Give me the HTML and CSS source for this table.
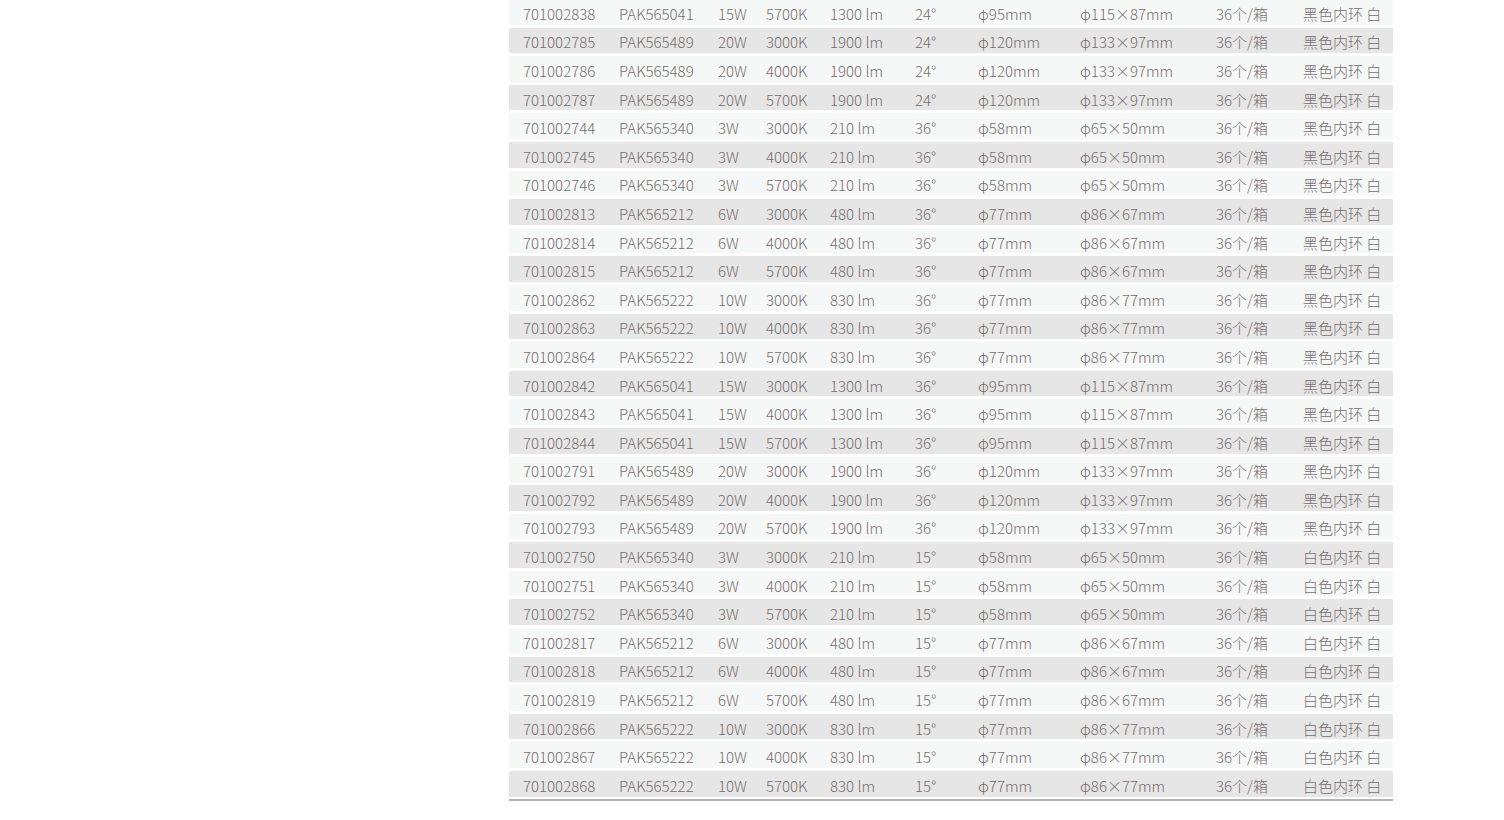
FILE: index.html
```html
<!DOCTYPE html>
<html lang="zh-CN">
<head>
    <meta charset="UTF-8">
    <meta name="viewport" content="width=device-width, initial-scale=1.0">
    <title>产品参数</title>
    <link rel="stylesheet" href="styles.css">
</head>
<body>

    <div class="page">
        <table class="spec-table">
            <colgroup>
                <col class="c-code">
                <col class="c-model">
                <col class="c-power">
                <col class="c-cct">
                <col class="c-lm">
                <col class="c-angle">
                <col class="c-cut">
                <col class="c-size">
                <col class="c-pack">
                <col class="c-color">
            </colgroup>
            <tbody id="rows"></tbody>
        </table>
    </div>

    <script>
        // code, model, power, cct, lumen, angle, cutout, size, ring
        const rows = [
            ['701002838', 'PAK565041', '15W', '5700K', '1300 lm', '24°', 'φ95mm', 'φ115×87mm', '黑色内环 白'],
            ['701002785', 'PAK565489', '20W', '3000K', '1900 lm', '24°', 'φ120mm', 'φ133×97mm', '黑色内环 白'],
            ['701002786', 'PAK565489', '20W', '4000K', '1900 lm', '24°', 'φ120mm', 'φ133×97mm', '黑色内环 白'],
            ['701002787', 'PAK565489', '20W', '5700K', '1900 lm', '24°', 'φ120mm', 'φ133×97mm', '黑色内环 白'],
            ['701002744', 'PAK565340', '3W', '3000K', '210 lm', '36°', 'φ58mm', 'φ65×50mm', '黑色内环 白'],
            ['701002745', 'PAK565340', '3W', '4000K', '210 lm', '36°', 'φ58mm', 'φ65×50mm', '黑色内环 白'],
            ['701002746', 'PAK565340', '3W', '5700K', '210 lm', '36°', 'φ58mm', 'φ65×50mm', '黑色内环 白'],
            ['701002813', 'PAK565212', '6W', '3000K', '480 lm', '36°', 'φ77mm', 'φ86×67mm', '黑色内环 白'],
            ['701002814', 'PAK565212', '6W', '4000K', '480 lm', '36°', 'φ77mm', 'φ86×67mm', '黑色内环 白'],
            ['701002815', 'PAK565212', '6W', '5700K', '480 lm', '36°', 'φ77mm', 'φ86×67mm', '黑色内环 白'],
            ['701002862', 'PAK565222', '10W', '3000K', '830 lm', '36°', 'φ77mm', 'φ86×77mm', '黑色内环 白'],
            ['701002863', 'PAK565222', '10W', '4000K', '830 lm', '36°', 'φ77mm', 'φ86×77mm', '黑色内环 白'],
            ['701002864', 'PAK565222', '10W', '5700K', '830 lm', '36°', 'φ77mm', 'φ86×77mm', '黑色内环 白'],
            ['701002842', 'PAK565041', '15W', '3000K', '1300 lm', '36°', 'φ95mm', 'φ115×87mm', '黑色内环 白'],
            ['701002843', 'PAK565041', '15W', '4000K', '1300 lm', '36°', 'φ95mm', 'φ115×87mm', '黑色内环 白'],
            ['701002844', 'PAK565041', '15W', '5700K', '1300 lm', '36°', 'φ95mm', 'φ115×87mm', '黑色内环 白'],
            ['701002791', 'PAK565489', '20W', '3000K', '1900 lm', '36°', 'φ120mm', 'φ133×97mm', '黑色内环 白'],
            ['701002792', 'PAK565489', '20W', '4000K', '1900 lm', '36°', 'φ120mm', 'φ133×97mm', '黑色内环 白'],
            ['701002793', 'PAK565489', '20W', '5700K', '1900 lm', '36°', 'φ120mm', 'φ133×97mm', '黑色内环 白'],
            ['701002750', 'PAK565340', '3W', '3000K', '210 lm', '15°', 'φ58mm', 'φ65×50mm', '白色内环 白'],
            ['701002751', 'PAK565340', '3W', '4000K', '210 lm', '15°', 'φ58mm', 'φ65×50mm', '白色内环 白'],
            ['701002752', 'PAK565340', '3W', '5700K', '210 lm', '15°', 'φ58mm', 'φ65×50mm', '白色内环 白'],
            ['701002817', 'PAK565212', '6W', '3000K', '480 lm', '15°', 'φ77mm', 'φ86×67mm', '白色内环 白'],
            ['701002818', 'PAK565212', '6W', '4000K', '480 lm', '15°', 'φ77mm', 'φ86×67mm', '白色内环 白'],
            ['701002819', 'PAK565212', '6W', '5700K', '480 lm', '15°', 'φ77mm', 'φ86×67mm', '白色内环 白'],
            ['701002866', 'PAK565222', '10W', '3000K', '830 lm', '15°', 'φ77mm', 'φ86×77mm', '白色内环 白'],
            ['701002867', 'PAK565222', '10W', '4000K', '830 lm', '15°', 'φ77mm', 'φ86×77mm', '白色内环 白'],
            ['701002868', 'PAK565222', '10W', '5700K', '830 lm', '15°', 'φ77mm', 'φ86×77mm', '白色内环 白']
        ];

        const tbody = document.getElementById('rows');
        rows.forEach(function(r) {
            const tr = document.createElement('tr');
            const cells = r.slice(0, 8).concat(['36个/箱', r[8]]);
            cells.forEach(function(text) {
                const td = document.createElement('td');
                td.textContent = text;
                tr.appendChild(td);
            });
            tbody.appendChild(tr);
        });
    </script>

</body>
</html>
```

FILE: styles.css
```css
body {
    margin: 0;
    background-color: #ffffff;
    font-family: 'Noto Sans CJK SC', 'Noto Sans', sans-serif;
    font-weight: 300;
    color: #776e6e; /* warm gray text */
}
.page {
    padding-left: 509px;
    margin-top: -1px;
}
.spec-table {
    width: 884px;
    table-layout: fixed;
    border-collapse: separate;
    border-spacing: 0;
    border-bottom: 2px solid #b4b4b4;
    font-size: 15px;
}
.spec-table td {
    height: 21.6px;
    padding: 4px 0 0 14px;
    border-bottom: 3px solid #ffffff;
    line-height: 20px;
    white-space: nowrap;
    vertical-align: middle;
    background-color: #f6f8f8;
    background-clip: padding-box;
}
.spec-table tr:nth-child(even) td {
    background-color: #e6e6e6;
}
.spec-table tr:last-child td {
    border-bottom-width: 2px;
}
.c-code { width: 96px; }
.c-model { width: 99px; }
.c-power { width: 48px; }
.c-cct { width: 64px; }
.c-lm { width: 85px; }
.c-angle { width: 63px; }
.c-cut { width: 102px; }
.c-size { width: 136px; }
.c-pack { width: 87px; }
.c-color { width: 104px; }
```
